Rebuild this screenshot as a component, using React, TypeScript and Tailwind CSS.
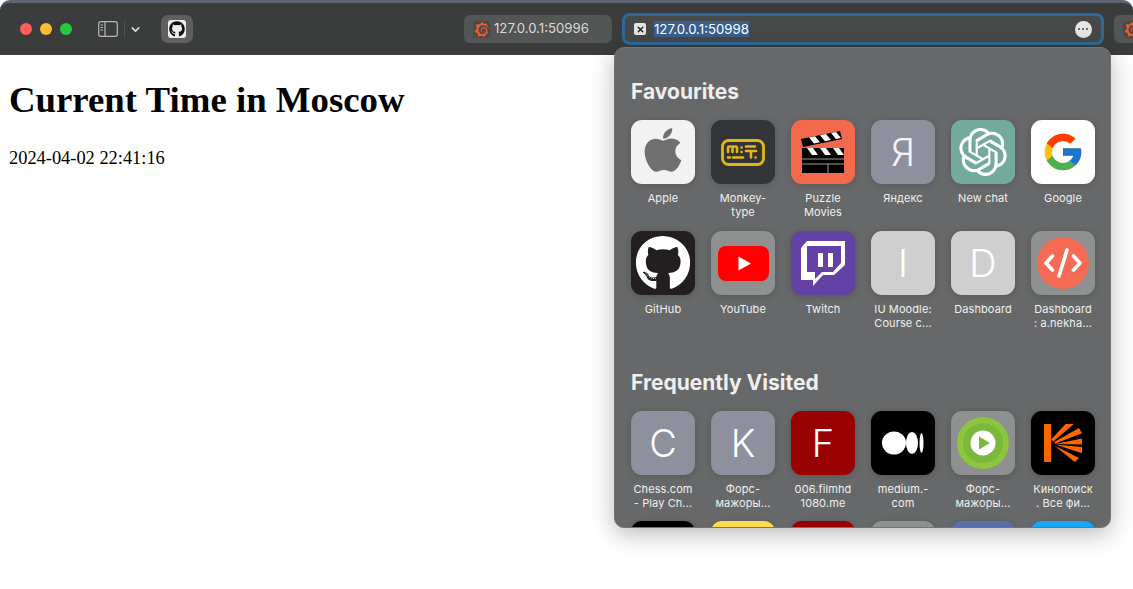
import React from "react";
import { FaApple, FaGithub } from "react-icons/fa";
import { FcGoogle } from "react-icons/fc";
import { SiGrafana, SiOpenai } from "react-icons/si";
import { ChevronDown, X } from "lucide-react";

function Monkey() {
  return (
    <svg width="44" height="27" viewBox="0 0 44 27" fill="none" stroke="#e2b714" strokeWidth="2.600" strokeLinecap="round">
      <rect x="1.500" y="1.500" width="41" height="24" rx="6" strokeWidth="2.800" />
      <path d="M7 13V9c0-1 .8-1.500 1.600-1.500h1.500c.9 0 1.400.6 1.400 1.500v4M11.500 9c0-1 .7-1.500 1.500-1.500h1.500c.9 0 1.500.6 1.500 1.500v4" />
      <path d="M20.500 8.500h.1M20.500 13h.1M25 7.500h9M25 12h10M30 12v6.500M34.500 18.500h.1M7 18.500h2M12 18.500h10" />
    </svg>
  );
}

function Clapper() {
  return (
    <svg width="44" height="42" viewBox="0 0 44 42">
      <path d="M0 8 39 0l2 8-39 8z" fill="#000" />
      <path d="M8 6.500l5 6 6-1.200-5-6zM19 4.300l5 6 6-1.200-5-6zM30 2l5 6 5-1-5-6z" fill="#fff" />
      <rect x="1" y="17" width="42" height="25" fill="#000" />
      <path d="M6 17l5 7h6l-5-7zM19 17l5 7h6l-5-7zM32 17l5 7h6l-5-7z" fill="#fff" />
      <path d="M1 28h42M1 33h42" stroke="#9a9a9a" strokeWidth="1" />
      <path d="M27 33v9" stroke="#9a9a9a" strokeWidth="1" />
    </svg>
  );
}

function YouTube() {
  return (
    <svg width="51" height="35" viewBox="0 0 51 35">
      <rect width="51" height="35" rx="8" fill="#ff0000" />
      <path d="M20.500 10.500v14l12.500-7z" fill="#fff" />
    </svg>
  );
}

function Twitch() {
  return (
    <svg width="64" height="64" viewBox="0 0 64 64">
      <path fillRule="evenodd" fill="#fff" d="M16 10h38v24L43 44H32L22 55v-6H10V17zM16 15v26h8v7l7-7h11l8-9V15z" />
      <path fill="#fff" d="M27 22h5v14h-5zM37 22h5v14h-5z" />
    </svg>
  );
}

function CodeBadge() {
  return (
    <svg width="52" height="52" viewBox="0 0 52 52" fill="none" stroke="#fff" strokeWidth="3.600" strokeLinecap="round" strokeLinejoin="round">
      <circle cx="26" cy="26" r="26" fill="#f56b53" stroke="none" />
      <path d="M15.500 19 9 26l6.500 7M36.500 19 43 26l-6.500 7M30 13l-8 26" />
    </svg>
  );
}

function Medium() {
  return (
    <svg width="42" height="24" viewBox="0 0 42 24" fill="#fff">
      <ellipse cx="12" cy="12" rx="12" ry="11.500" />
      <ellipse cx="30" cy="12" rx="6" ry="11" />
      <ellipse cx="39.500" cy="12" rx="2" ry="10" />
    </svg>
  );
}

function GreenPlay() {
  return (
    <svg width="52" height="52" viewBox="0 0 52 52">
      <circle cx="26" cy="26" r="26" fill="#8cc63f" />
      <circle cx="26" cy="26" r="20" fill="#7ab93a" />
      <circle cx="26" cy="26" r="12.500" fill="#fff" />
      <path d="M22 19.500v13l11-6.500z" fill="#7ab93a" />
    </svg>
  );
}

function Kinopoisk() {
  return (
    <svg width="38" height="38" viewBox="0 0 37 37" fill="#ff6600">
      <path d="M0 0h7v37H0zM7 15 21 0h8L9 17zM10 17.500 34 4l3 5-26 10zM11 19.500l26-5.500v6zM11 20l26 2.500v6zM10 21l24 12-4 4z" />
    </svg>
  );
}

type Item = { label: React.ReactNode; bg: string; icon: React.ReactNode };

const letter = (s: string, cls: string) => <span className={"font-light text-[38px] leading-none " + cls}>{s}</span>;

const favourites: Item[] = [
  { label: "Apple", bg: "bg-[#f2f2f2]", icon: <FaApple className="text-[50px] text-[#707070] -mt-1" /> },
  { label: <>Monkey-<br />type</>, bg: "bg-[#323437]", icon: <Monkey /> },
  { label: <>Puzzle<br />Movies</>, bg: "bg-[#f2694d]", icon: <Clapper /> },
  { label: "Яндекс", bg: "bg-[#8f909e]", icon: letter("Я", "text-[#f4f4f4]") },
  { label: "New chat", bg: "bg-[#74aa9c]", icon: <SiOpenai className="text-[48px] text-white" /> },
  { label: "Google", bg: "bg-white", icon: <FcGoogle className="text-[44px]" /> },
  { label: "GitHub", bg: "bg-[#231f20]", icon: <FaGithub className="text-[56px] text-white" /> },
  { label: "YouTube", bg: "bg-[#8f9090]", icon: <YouTube /> },
  { label: "Twitch", bg: "bg-[#6441a5]", icon: <Twitch /> },
  { label: <>IU Moodle:<br />Course c...</>, bg: "bg-[#cfcfcf]", icon: letter("I", "text-white") },
  { label: "Dashboard", bg: "bg-[#cfcfcf]", icon: letter("D", "text-white") },
  { label: <>Dashboard<br />: a.nekha...</>, bg: "bg-[#8f9090]", icon: <CodeBadge /> },
];

const frequent: Item[] = [
  { label: <>Chess.com<br />- Play Ch...</>, bg: "bg-[#8f909e]", icon: letter("C", "text-white") },
  { label: <>Форс-<br />мажоры...</>, bg: "bg-[#8f909e]", icon: letter("K", "text-white") },
  { label: <>006.filmhd<br />1080.me</>, bg: "bg-[#990000]", icon: letter("F", "text-white") },
  { label: <>medium.-<br />com</>, bg: "bg-black", icon: <Medium /> },
  { label: <>Форс-<br />мажоры...</>, bg: "bg-[#8f9090]", icon: <GreenPlay /> },
  { label: <>Кинопоиск<br />. Все фи...</>, bg: "bg-black", icon: <Kinopoisk /> },
  { label: "", bg: "bg-black", icon: null },
  { label: "", bg: "bg-[#ffdb4d]", icon: null },
  { label: "", bg: "bg-[#990000]", icon: null },
  { label: "", bg: "bg-[#8f9090]", icon: null },
  { label: "", bg: "bg-[#5a6fae]", icon: null },
  { label: "", bg: "bg-[#18a8f5]", icon: null },
];

function Tile({ item }: { item: Item }) {
  return (
    <div className="flex flex-col items-center">
      <div className={"w-16 h-16 rounded-[11px] shrink-0 flex items-center justify-center overflow-hidden shadow-[0_1px_6px_rgba(0,0,0,0.18)] " + item.bg}>
        {item.icon}
      </div>
      <div className="mt-[7px] h-[28px] w-[80px] text-center text-[11px] leading-[14px] tracking-[0.1px] text-[#f0f0f0]">{item.label}</div>
    </div>
  );
}

function Section({ title, items, gap }: { title: string; items: Item[]; gap: string }) {
  return (
    <section>
      <h2 className="ml-[8px] h-[28px] text-[21px] leading-[28px] font-bold text-[#efefef] mb-[14px]">{title}</h2>
      <div className={"grid grid-cols-[repeat(6,80px)] " + gap}>
        {items.map((it, i) => <Tile key={i} item={it} />)}
      </div>
    </section>
  );
}

function Favicon() {
  return (
    <span className="w-[17px] h-[17px] rounded-[3px] bg-[#4a4a4a] flex items-center justify-center shrink-0">
      <SiGrafana className="text-[15px] text-[#f05a28]" />
    </span>
  );
}

export default function App() {
  return (
    <div className="relative min-h-[589px] bg-white overflow-hidden font-['Inter',sans-serif]">
      <header className="h-[55px] bg-[#3b3c3c] border-t-[3px] border-[#596372] rounded-t-[10px] flex items-center overflow-hidden">
        <div className="ml-[20px] flex gap-2 shrink-0">
          <span className="w-3 h-3 rounded-full bg-[#ff5f57]" />
          <span className="w-3 h-3 rounded-full bg-[#febc2e]" />
          <span className="w-3 h-3 rounded-full bg-[#28c840]" />
        </div>
        <svg className="ml-[26px] shrink-0" width="20" height="16" viewBox="0 0 20 16" fill="none" stroke="#b8b8b8" strokeWidth="1.200">
          <rect x="0.700" y="0.700" width="18.600" height="14.600" rx="2" />
          <path d="M7 1v14" />
          <path d="M2.500 4h2.500M2.500 6.500h2.500M2.500 9h2.500" strokeWidth="1" />
        </svg>
        <span className="ml-[6px] w-px h-[18px] bg-[#4f5050] shrink-0" />
        <ChevronDown className="ml-[4px] w-[13px] h-[13px] text-[#dcdcdc] shrink-0" strokeWidth={3} />
        <div className="ml-[19px] w-[32px] h-[28px] rounded-[7px] bg-[#5e5f5f] flex items-center justify-center shrink-0">
          <span className="w-[18px] h-[18px] rounded-[3px] bg-[#ececec] flex items-center justify-center">
            <FaGithub className="text-[16px] text-[#111]" />
          </span>
        </div>
        <div className="ml-[271px] w-[148px] h-[28px] rounded-[6px] bg-[#545555] flex items-center pl-[9px] gap-[4px] text-[13.200px] text-[#dadada] shrink-0">
          <Favicon />
          <span>127.0.0.1:50996</span>
        </div>
        <div className="ml-[10px] w-[482px] h-[32px] rounded-[8px] border-[3px] border-[#2c6a9c] bg-[#474848] flex items-center pl-[9px] pr-[9.500px] text-[13.200px] text-white shrink-0">
          <span className="w-[12px] h-[12px] rounded-[2px] bg-[#e4e4e4] flex items-center justify-center shrink-0">
            <X className="w-[9px] h-[9px] text-[#222]" strokeWidth={4} />
          </span>
          <span className="ml-[8px] bg-[#3a5f8e] leading-[16px]">127.0.0.1:50998</span>
          <span className="ml-auto w-[17px] h-[17px] rounded-full bg-[#e6e6e6] flex items-center justify-center gap-[1.500px]">
            <i className="w-[2.500px] h-[2.500px] rounded-full bg-[#444]" />
            <i className="w-[2.500px] h-[2.500px] rounded-full bg-[#444]" />
            <i className="w-[2.500px] h-[2.500px] rounded-full bg-[#444]" />
          </span>
        </div>
        <div className="ml-[10px] w-[148px] h-[28px] rounded-[6px] bg-[#545555] flex items-center pl-[9px] shrink-0">
          <Favicon />
        </div>
      </header>

      <main className="px-[9px] font-['Liberation_Serif',serif] text-black">
        <h1 className="mt-[24px] text-[36.800px] leading-[42px] font-bold">Current Time in Moscow</h1>
        <p className="mt-[27px] text-[18.400px] leading-[21px]">2024-04-02 22:41:16</p>
      </main>

      <div className="absolute left-[614px] top-[47px] w-[497px] h-[481px] rounded-[10px] bg-[#676869] border border-[#737474] shadow-[0_6px_24px_rgba(0,0,0,0.28)] overflow-hidden pt-[30px] pl-[8px]">
        <Section title="Favourites" items={favourites} gap="gap-y-3" />
        <div className="mt-[39px]">
          <Section title="Frequently Visited" items={frequent} gap="gap-y-[11px]" />
        </div>
      </div>
    </div>
  );
}
